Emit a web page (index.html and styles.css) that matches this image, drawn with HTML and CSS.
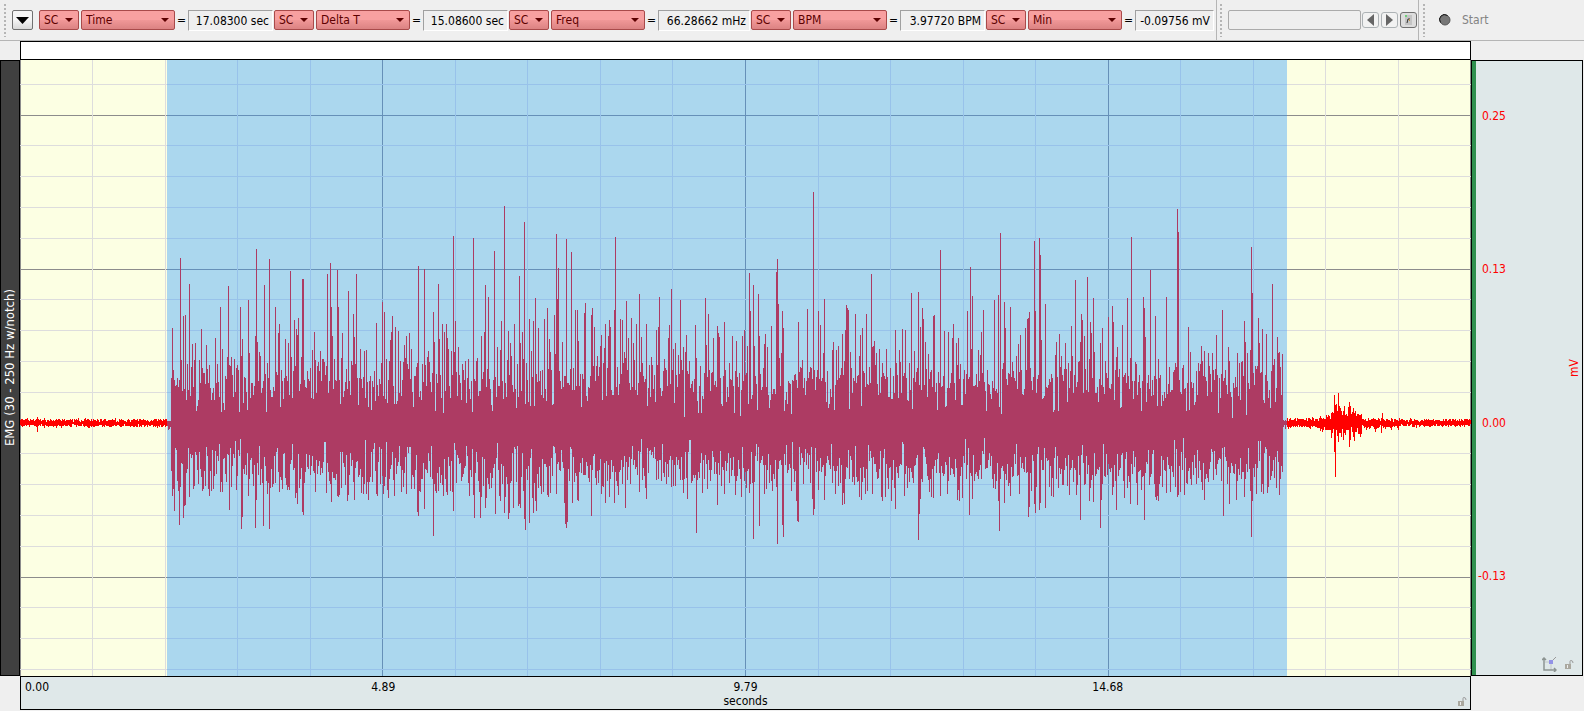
FILE: index.html
```html
<!DOCTYPE html>
<html lang="en">
<head>
<meta charset="utf-8">
<title>EMG recording</title>
<link rel="stylesheet" href="styles.css">
</head>
<body>
<header class="toolbar">
  <section class="bar">
    <i class="grip"></i>
    <button class="menu-button" aria-label="Measurement menu"><svg width="13" height="7" viewBox="0 0 13 7"><path d="M0 0H13L6.500 7Z"/></svg></button>
    <div class="measure">
      <span class="pick short"><select aria-label="Channel 1"><option>SC</option></select></span>
      <span class="pick"><select aria-label="Measurement 1"><option>Time</option></select></span>
      <span class="equals">=</span><output class="value">17.08300 sec</output>
    </div>
    <div class="measure">
      <span class="pick short"><select aria-label="Channel 2"><option>SC</option></select></span>
      <span class="pick"><select aria-label="Measurement 2"><option>Delta T</option></select></span>
      <span class="equals">=</span><output class="value">15.08600 sec</output>
    </div>
    <div class="measure">
      <span class="pick short"><select aria-label="Channel 3"><option>SC</option></select></span>
      <span class="pick"><select aria-label="Measurement 3"><option>Freq</option></select></span>
      <span class="equals">=</span><output class="value wide">66.28662 mHz</output>
    </div>
    <div class="measure">
      <span class="pick short"><select aria-label="Channel 4"><option>SC</option></select></span>
      <span class="pick"><select aria-label="Measurement 4"><option>BPM</option></select></span>
      <span class="equals">=</span><output class="value">3.97720 BPM</output>
    </div>
    <div class="measure">
      <span class="pick short"><select aria-label="Channel 5"><option>SC</option></select></span>
      <span class="pick"><select aria-label="Measurement 5"><option>Min</option></select></span>
      <span class="equals">=</span><output class="value narrow">-0.09756 mV</output>
    </div>
  </section>
  <section class="bar marker-bar">
    <i class="grip"></i>
    <input class="marker-text" type="text" aria-label="Marker text">
    <button class="step" aria-label="Previous marker"><svg width="7" height="12" viewBox="0 0 7 12"><path d="M7 0V12L0 6Z" fill="#666"/></svg></button>
    <button class="step" aria-label="Next marker"><svg width="7" height="12" viewBox="0 0 7 12"><path d="M0 0V12L7 6Z" fill="#666"/></svg></button>
    <button class="step tool" aria-label="Marker tools"><svg width="9" height="12" viewBox="0 0 9 12"><path d="M1 1H8V11H1Z" fill="#c4c4c4"/><path d="M1 1H3V3H1Z" fill="#6fd07a"/><path d="M3 9L4 5H6" fill="none" stroke="#333"/><path d="M5 5H6V7H5Z" fill="#c79a4b"/></svg></button>
  </section>
  <section class="bar start-bar">
    <i class="grip"></i>
    <button class="start" disabled><svg width="12" height="12" viewBox="0 0 12 12"><circle cx="6" cy="6" r="5" fill="#777" stroke="#555"/><path d="M1.500 8.500A5 5 0 0 1 8.500 1.500" fill="none" stroke="#111"/></svg>Start</button>
  </section>
</header>
<main class="workspace">
  <div class="events"></div>
  <div class="channel"><span>EMG (30 - 250 Hz w/notch)</span></div>
  <div class="plot">
    <svg class="graph" viewBox="20 60 1451 616" preserveAspectRatio="none" role="img" aria-label="EMG signal">
      <g id="grid"></g>
      <path id="wave" class="wave"/>
      <rect class="selection" x="167" y="60" width="1120" height="616"/>
    </svg>
  </div>
  <div class="amplitude">
    <div class="scale"><span>0.25</span><span>0.13</span><span>0.00</span><span>-0.13</span></div>
    <span class="unit">mV</span>
    <div class="tools">
      <button aria-label="Axis settings"><svg width="15" height="15" viewBox="0 0 15 15"><path d="M3 5H10M9 6V13" stroke="#c3c8ca" fill="none"/><path d="M2 1V13H14M0 3L2 1L4 3M12 11L14 13L12 15" stroke="#8d9492" stroke-width="1.500" fill="none"/><path d="M10 4L14 0" stroke="#999"/><path d="M7 3H11V7H7Z" fill="#9292e6"/></svg></button>
      <button aria-label="Lock amplitude scale"><svg width="9" height="9" viewBox="0 0 9 9"><path d="M0 4H6V9H0Z" fill="#aaa89f"/><path d="M5 4V1.500Q5 .5 6 .5Q8 .5 8 3" fill="none" stroke="#999"/><path d="M2.500 5V8" stroke="#eee"/></svg></button>
    </div>
  </div>
  <div class="time">
    <div class="ticks"><span>0.00</span><span>4.89</span><span>9.79</span><span>14.68</span></div>
    <span class="time-unit">seconds</span>
    <div class="tools">
      <button aria-label="Lock time scale"><svg width="9" height="9" viewBox="0 0 9 9"><path d="M0 4H6V9H0Z" fill="#aaa89f"/><path d="M5 4V1.500Q5 .5 6 .5Q8 .5 8 3" fill="none" stroke="#999"/><path d="M2.500 5V8" stroke="#eee"/></svg></button>
    </div>
  </div>
</main>
<script src="graph.js"></script>
</body>
</html>
```
FILE: styles.css
```css
* { box-sizing: border-box; }
body {
  margin: 0;
  height: 100vh;
  display: flex;
  flex-direction: column;
  background: #efefef;
  color: #000;
  font: 12px/16px "DejaVu Sans Condensed", "Noto Sans", sans-serif;
  overflow: hidden;
}
button, select, input { font: inherit; margin: 0; }
button { display: flex; align-items: center; justify-content: center; padding: 0; }

.toolbar { display: flex; height: 41px; flex: none; border-bottom: 1px solid #b5b5b5; }
.bar { display: flex; align-items: center; padding-left: 4px; }
.grip {
  width: 2px;
  height: 33px;
  margin-right: 6px;
  background: repeating-linear-gradient(#b5b5b5 0 2px, transparent 2px 4px);
}
.menu-button {
  width: 21px;
  height: 20px;
  margin-right: 6px;
  border: 1px solid #707070;
  border-radius: 2px;
  background: linear-gradient(#f4f4f4 50%, #d8d8d8);
}
.measure { display: flex; align-items: center; margin-right: 1px; }
.pick { position: relative; width: 94px; height: 20px; }
.pick.short { width: 40px; margin-right: 2px; }
.pick select {
  appearance: none;
  display: block;
  width: 100%;
  height: 20px;
  padding: 0 4px;
  border: 1px solid #a94a4a;
  border-radius: 2px;
  background: linear-gradient(#f8a0a0 0 50%, #f19898 50%, #db8282);
  color: #5c0000;
}
.pick::after {
  content: "";
  position: absolute;
  right: 6px;
  top: 8px;
  border: 4px solid transparent;
  border-top-color: #5c0000;
  border-bottom: 0;
  pointer-events: none;
}
.equals { width: 13px; text-align: center; }
.value {
  width: 85px;
  height: 21px;
  padding-right: 3px;
  border: 1px solid #fff;
  border-top-color: #a0a0a0;
  border-left-color: #a0a0a0;
  line-height: 20px;
  text-align: right;
  white-space: nowrap;
}
.value.wide { width: 92px; }
.value.narrow { width: 79px; }
.marker-bar, .start-bar { border-left: 1px solid #b5b5b5; margin-left: 1px; }
.marker-bar { padding-left: 3px; }
.marker-text {
  width: 133px;
  height: 20px;
  margin-right: 1px;
  border: 1px solid #ababab;
  border-radius: 2px;
  background: #efefef;
}
.step {
  width: 17px;
  height: 16px;
  margin-right: 2px;
  border: 1px solid #adb2b5;
  border-radius: 3px;
  background: #f2f2f2;
}
.step.tool { border-color: #707070; margin-right: 0; background: #ddd; }
.start { gap: 11px; margin-left: 8px; border: 0; background: none; color: #838383; }

.workspace {
  flex: 1;
  min-height: 0;
  display: grid;
  grid-template-columns: 20px minmax(0, 1fr) 113px;
  grid-template-rows: 19px minmax(0, 1fr) 34px;
  padding-bottom: 1px;
}
.events { grid-column: 2; background: #fff; border: 1px solid #000; }
.channel {
  grid-area: 2 / 1;
  display: flex;
  align-items: center;
  justify-content: center;
  border: 1px solid #000;
  background: #404040;
  color: #fff;
  font-size: 13px;
}
.channel span { writing-mode: vertical-rl; transform: rotate(180deg); white-space: nowrap; }
.plot { grid-area: 2 / 2; background: #fcffe3; }
.graph { display: block; width: 100%; height: 100%; shape-rendering: crispEdges; }
.minor { stroke: #ddd; }
.major { stroke: #8c8c8c; }
.wave { stroke: #f00; fill: none; }
.selection { fill: rgb(45 151 254 / .39); }
.amplitude {
  grid-area: 2 / 3;
  position: relative;
  display: flex;
  justify-content: space-between;
  align-items: stretch;
  margin-right: 1px;
  border: 1px solid #000;
  background: #dfe8e9;
  color: #f00;
}
.scale {
  display: grid;
  grid-template-rows: 110fr 198fr 110fr 198fr;
  align-items: center;
  justify-items: end;
  padding-left: 2px;
  border-left: 4px solid #30904f;
}
.unit { align-self: center; writing-mode: vertical-rl; transform: rotate(180deg); }
.tools { position: absolute; right: 8px; bottom: 3px; display: flex; gap: 8px; align-items: center; }
.tools button { border: 0; background: none; }
.time {
  grid-area: 3 / 2;
  position: relative;
  border: 1px solid #000;
  background: #dfe8e9;
  line-height: 14px;
  padding-top: 3px;
}
.ticks { display: grid; grid-template-columns: 1fr 2fr 2fr 2fr 1fr; text-align: center; }
.ticks span:first-child { text-align: left; padding-left: 4px; }
.time-unit { display: block; text-align: center; }
.time .tools { right: 3px; }
```
FILE: graph.js
```js
const ZERO = 423;

// Upper peaks of the trace: column, row.
const upper = [37,417, 172,328,180,258,183,316,185,315,189,284,192,344,195,343,201,329,206,345,215,338,220,307,222,349,228,286,
234,359,240,307,242,339,248,300,249,353,255,336,256,249,257,342,259,352,264,285,269,259,275,307,278,333,279,324,285,339,
288,343,290,271,291,357,294,320,296,329,297,335,298,318,302,279,303,279,312,350,314,332,318,362,327,274,330,263,331,307,
332,336,337,270,338,307,342,333,348,291,353,314,354,337,356,274,360,349,376,323,382,302,384,312,390,340,391,332,392,316,
395,327,398,331,404,345,406,336,409,333,411,349,418,266,424,269,433,312,434,342,438,284,439,339,442,324,444,332,446,324,
447,338,453,236,455,321,458,347,473,238,481,336,484,332,485,285,488,297,494,251,497,347,500,350,501,321,504,206,508,331,
510,343,514,324,519,276,520,343,522,332,524,222,529,319,531,351,533,321,535,298,538,328,544,319,547,308,549,339,554,315,
556,234,557,299,558,268,562,342,566,239,571,252,575,310,577,310,578,341,584,313,585,303,591,315,592,308,594,327,601,335,
605,324,608,336,609,320,610,327,614,310,615,237,620,319,622,320,626,301,628,338,631,318,633,343,636,324,639,294,641,337,
646,324,656,330,658,327,659,297,668,338,669,325,671,289,675,343,680,300,686,335,695,325,705,298,706,345,708,314,713,338,
717,326,718,333,719,337,724,322,732,336,736,341,742,336,744,330,749,273,750,311,753,285,758,294,759,336,764,344,765,334,
767,347,771,326,776,272,777,259,778,304,782,311,783,328,798,322,807,309,813,192,818,311,820,325,824,299,833,342,838,346,
842,334,845,330,846,305,847,308,848,310,850,352,855,314,860,335,862,328,866,314,871,274,874,341,895,330,899,350,902,329,
905,330,911,293,918,292,920,327,922,308,923,319,925,342,933,316,934,315,940,250,944,331,948,332,952,338,953,324,956,343,
958,338,967,311,970,267,971,349,972,296,981,332,983,310,994,300,998,295,1000,233,1004,302,1005,328,1010,307,1018,344,
1020,335,1025,328,1027,319,1028,318,1029,312,1034,241,1035,311,1039,238,1040,255,1041,340,1045,304,1056,342,1059,334,
1065,343,1071,326,1075,280,1080,342,1081,314,1082,320,1084,336,1087,277,1090,322,1091,333,1093,298,1100,343,1102,328,
1108,317,1112,306,1113,322,1117,347,1122,325,1127,298,1131,237,1143,297,1144,308,1145,337,1150,270,1155,316,1166,297,
1177,209,1178,232,1188,327,1190,352,1201,346,1204,351,1216,335,1222,310,1237,353,1244,321,1245,342,1251,247,1252,293,
1258,318,1259,343,1262,329,1266,334,1272,284,1277,337,1278,353,1282,354,
1331,413,1334,395,1335,405,1336,404,1337,411,1338,393,1339,406,1340,408,1343,411,1344,406,1348,407,1349,402,1350,406,
1353,408,1354,413,1358,414,1382,413];

// Lower peaks of the trace: column, row.
const lower = [37,432,38,426,174,511,179,525,180,487,183,518,184,506,185,505,189,497,211,491,220,492,222,492,229,510,241,529,242,517,
248,496,255,528,256,500,263,526,269,529,270,488,279,492,289,490,296,493,297,504,302,512,303,515,304,483,326,493,331,502,
337,496,341,488,348,495,354,500,364,484,376,494,377,496,383,494,384,486,403,487,406,494,414,489,417,512,418,516,424,509,
433,536,438,491,443,496,447,495,453,511,473,495,474,518,480,518,485,508,495,514,500,501,504,513,505,497,508,519,509,513,
513,508,518,506,519,504,520,508,524,519,525,530,529,523,532,498,533,513,535,501,536,511,547,495,550,493,556,494,564,503,
565,524,566,528,567,522,572,503,577,500,578,501,591,516,601,494,605,503,609,497,614,503,625,508,639,492,646,499,687,499,
696,533,717,505,724,494,735,495,741,497,749,493,753,539,759,526,777,544,782,525,783,537,796,501,797,521,798,522,812,499,
813,515,814,509,824,500,842,505,844,504,859,497,861,500,865,494,872,494,881,497,882,501,891,501,895,509,918,540,919,514,
920,499,933,498,940,496,947,494,957,500,959,501,969,515,972,499,998,501,999,531,1004,503,1019,494,1028,517,1029,507,
1034,504,1035,513,1039,510,1040,503,1045,508,1053,497,1076,495,1080,520,1089,501,1093,502,1100,528,1112,495,1116,510,
1130,504,1137,505,1144,520,1156,500,1158,501,1166,493,1177,497,1184,495,1204,500,1223,516,1229,504,1236,500,1244,497,
1251,537,1252,501,1256,494,1263,494,1279,495,
1334,452,1335,477,1338,442,1343,440,1349,447,1350,440,1354,441,1358,434,1375,432,1381,433];

const toMap = list => {
  const map = new Map();
  for (let i = 0; i < list.length; i += 2) map.set(list[i], list[i + 1]);
  return map;
};
const tops = toMap(upper);
const bottoms = toMap(lower);

let seed = 7;
const random = () => (seed = (seed * 16807) % 2147483647) / 2147483647;
const middling = () => (random() + random()) / 2;

// Least height and range, above and below zero.
const spread = x => {
  if (x < 168) return [1, 4, 1, 4];
  if (x < 171) return [1, 4, 3, 5];
  if (x < 1283) return [4, 76, 14, 64];
  if (x < 1320) return [1, 5, 1, 6];
  if (x < 1331) return [2, 7, 2, 9];
  if (x < 1362) return [3, 10, 2, 14];
  if (x < 1400) return [1, 5, 1, 7];
  return [1, 4, 1, 4];
};

let trace = "";
for (let x = 20; x < 1471; x++) {
  const [upMin, upRange, downMin, downRange] = spread(x);
  const up = Math.round(upMin + upRange * middling());
  const down = Math.round(downMin + downRange * middling());
  const top = tops.get(x) ?? ZERO - up;
  const bottom = bottoms.get(x) ?? ZERO + down;
  trace += `M${x + 0.5} ${top}V${bottom}`;
}
document.getElementById("wave").setAttribute("d", trace);

let minor = "";
let major = "M20.5 60V676M1470.5 60V676";
for (let i = 1; i < 20; i++) {
  const line = `M${Math.floor(20 + i * 72.55) + 0.5} 60V676`;
  if (i % 5 === 0) major += line; else minor += line;
}
for (let i = 0; i < 20; i++) {
  const line = `M20 ${Math.floor(84.3 + i * 30.8) + 0.5}H1471`;
  if (i % 5 === 1) major += line; else minor += line;
}
document.getElementById("grid").innerHTML = `<path class="major" d="${major}"/><path class="minor" d="${minor}"/>`;
```
